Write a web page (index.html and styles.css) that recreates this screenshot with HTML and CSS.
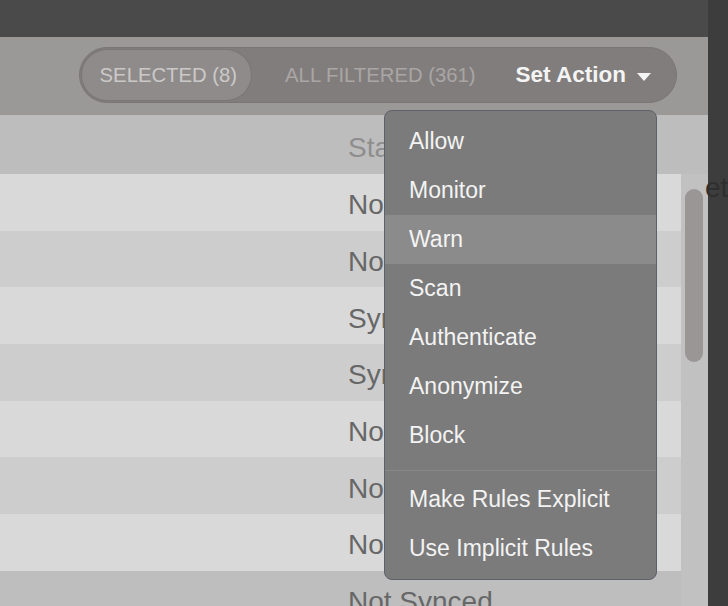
FILE: index.html
```html
<!DOCTYPE html>
<html>
<head>
<meta charset="utf-8">
<link rel="stylesheet" href="styles.css">
</head>
<body>
<div class="screen">
  <div class="main">
    <div class="topbar"></div>
    <div class="toolbar">
      <div class="pill">
        <span class="seg seg-selected">SELECTED (8)</span>
        <span class="seg seg-all">ALL FILTERED (361)</span>
        <span class="seg seg-action">Set Action<span class="caret"></span></span>
      </div>
    </div>
    <div class="table">
      <div class="thead"><span class="cell-status">Status</span></div>
      <div class="tbody">
        <div class="rows">
          <div class="row light"><span class="cell-status">Not Synced</span></div>
          <div class="row mid"><span class="cell-status">Not Synced</span></div>
          <div class="row light"><span class="cell-status">Synced</span></div>
          <div class="row mid"><span class="cell-status">Synced</span></div>
          <div class="row light"><span class="cell-status">Not Synced</span></div>
          <div class="row mid"><span class="cell-status">Not Synced</span></div>
          <div class="row light"><span class="cell-status">Not Synced</span></div>
          <div class="row last"><span class="cell-status">Not Synced</span></div>
        </div>
        <div class="track"><div class="thumb"></div></div>
      </div>
    </div>
  </div>
  <div class="strip"><span class="ghost">et</span></div>

  <div class="menu">
    <div class="item">Allow</div>
    <div class="item">Monitor</div>
    <div class="item active">Warn</div>
    <div class="item">Scan</div>
    <div class="item">Authenticate</div>
    <div class="item">Anonymize</div>
    <div class="item">Block</div>
    <div class="sep"></div>
    <div class="item">Make Rules Explicit</div>
    <div class="item">Use Implicit Rules</div>
  </div>
</div>
</body>
</html>
```

FILE: styles.css
```css
html, body {
  margin: 0;
  padding: 0;
  width: 728px;
  height: 606px;
  overflow: hidden;
  background: #3d3d3d;
  font-family: "Liberation Sans", Arial, Helvetica, sans-serif;
}

.screen {
  position: relative;
  display: flex;
  width: 728px;
  height: 606px;
  overflow: hidden;
}

.main {
  width: 708px;
  flex: none;
  display: flex;
  flex-direction: column;
  min-height: 0;
  overflow: hidden;
}

.topbar {
  flex: none;
  height: 37px;
  background: #4a4a4a;
}

.toolbar {
  flex: none;
  height: 78px;
  background: #9b9998;
  display: flex;
  align-items: center;
  justify-content: flex-end;
  padding-right: 31px;
  box-sizing: border-box;
}

.pill {
  display: flex;
  align-items: center;
  height: 56px;
  margin-top: -2px;
  box-sizing: border-box;
  padding: 2px 25px 2px 2px;
  border: 1px solid #7a7675;
  border-radius: 28px;
  background: #817d7c;
}

.seg {
  font-size: 20.3px;
  white-space: nowrap;
}

.seg-selected {
  height: 50px;
  display: flex;
  align-items: center;
  padding: 0 14px 0 18px;
  border-radius: 25px;
  background: #8f8b8a;
  box-shadow: 0 0 0 1px #7b7776;
  color: #cbc9c8;
}

.seg-all {
  margin-left: 34px;
  color: #a9a6a5;
}

.seg-action {
  margin-left: 40px;
  font-size: 22.5px;
  font-weight: bold;
  color: #f4f4f4;
  display: flex;
  align-items: center;
}

.caret {
  display: inline-block;
  margin-left: 11px;
  margin-top: 3px;
  width: 0;
  height: 0;
  border-left: 7px solid transparent;
  border-right: 7px solid transparent;
  border-top: 8px solid #f4f4f4;
}

.table {
  flex: 1;
  min-height: 0;
  display: flex;
  flex-direction: column;
}

.thead {
  flex: none;
  height: 59px;
  background: #bdbdbd;
  display: flex;
  align-items: center;
  padding-top: 6px;
  box-sizing: border-box;
}

.thead .cell-status {
  color: #8e8e8e;
}

.cell-status {
  padding-left: 348px;
  font-size: 28px;
  white-space: nowrap;
  color: #676767;
}

.tbody {
  flex: 1;
  min-height: 0;
  display: flex;
}

.rows {
  flex: 1;
  display: flex;
  flex-direction: column;
}

.row {
  height: 56.7px;
  flex: none;
  display: flex;
  align-items: center;
  padding-top: 6px;
  box-sizing: border-box;
}

.row.light { background: #d9d9d9; }
.row.mid { background: #cdcdcd; }
.row.last { background: #bebebe; }

.track {
  width: 27px;
  flex: none;
  background: #c1c1c1;
}

.thumb {
  margin: 15px 0 0 4px;
  width: 18px;
  height: 173px;
  border-radius: 9px;
  background: #9a9696;
}

.strip {
  width: 20px;
  flex: none;
  background: #3d3d3d;
  padding-top: 172px;
  box-sizing: border-box;
  white-space: nowrap;
}

.ghost {
  display: inline-block;
  margin-left: -3px;
  font-size: 28px;
  color: #2f2f2f;
}

.menu {
  position: absolute;
  left: 384px;
  top: 110px;
  width: 273px;
  height: 470px;
  box-sizing: border-box;
  padding-top: 6px;
  background: #7b7b7b;
  border: 1px solid #5c6068;
  border-radius: 8px;
  overflow: hidden;
}

.item {
  height: 49px;
  display: flex;
  align-items: center;
  padding-left: 24px;
  font-size: 23px;
  color: #f3f3f3;
  white-space: nowrap;
}

.item.active {
  background: #8b8b8b;
}

.sep {
  height: 1px;
  margin: 10px 0 4px;
  background: #888888;
}
```
